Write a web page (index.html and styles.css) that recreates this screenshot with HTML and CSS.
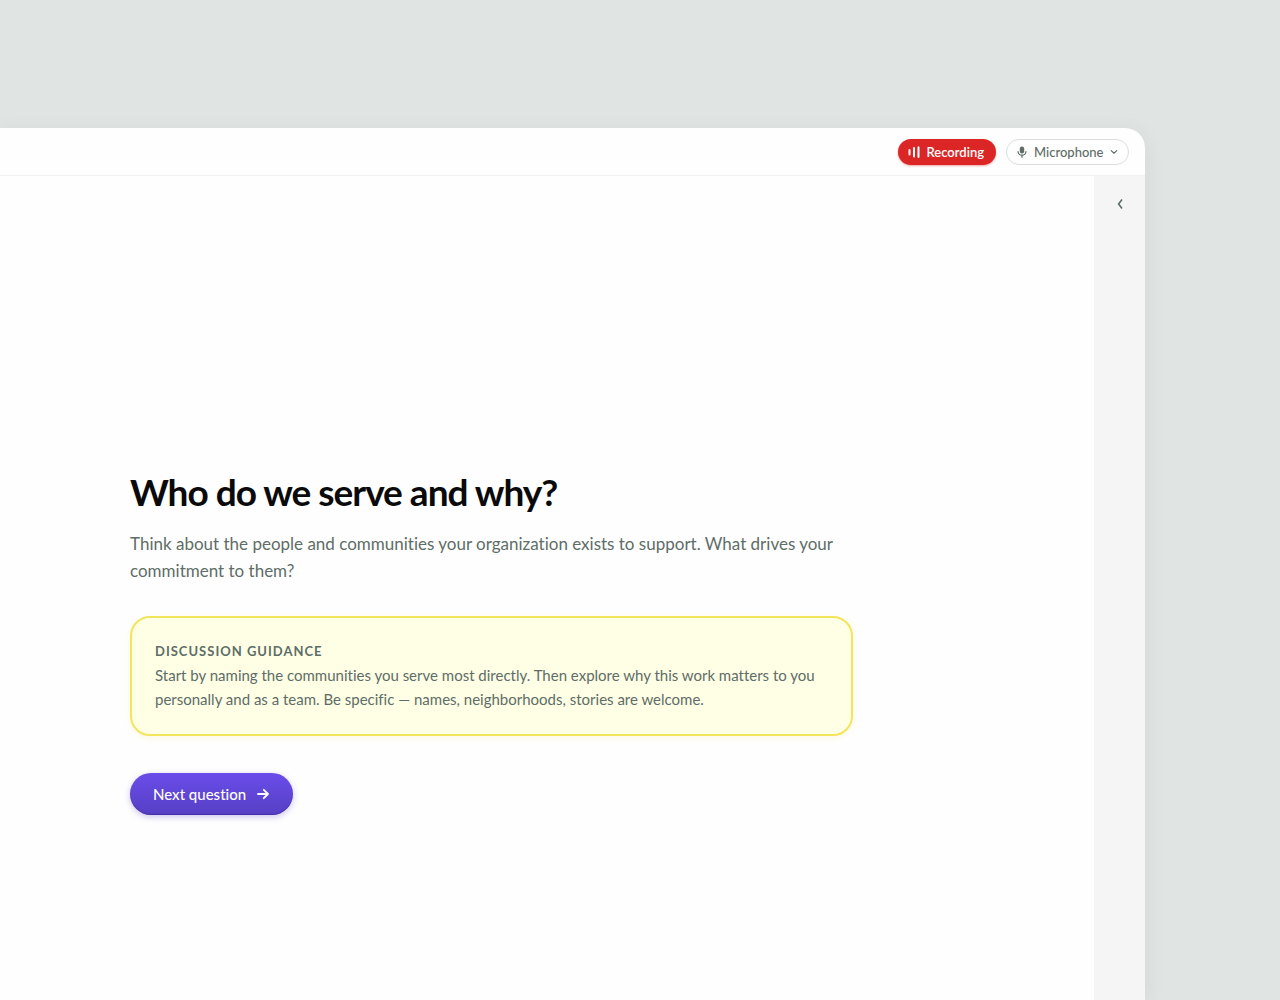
FILE: index.html
```html
<!DOCTYPE html>
<html lang="en">
<head>
  <meta charset="UTF-8" />
  <meta name="viewport" content="width=device-width, initial-scale=1.0"/>
  <title>Who do we serve and why?</title>
  <link rel="stylesheet" href="styles.css">
</head>
<body>
  <div class="window">
    <header class="topbar">
      <button class="recording" type="button">
        <svg width="12" height="12" viewBox="0 0 12 12" fill="none" stroke="currentColor" stroke-width="2" stroke-linecap="round" aria-hidden="true">
          <path d="M1.5 4v4.5M6 2v8.5M10.5 1.2v9.8"/>
        </svg>
        Recording
      </button>
      <div class="mic">
        <svg class="mic-icon" width="12" height="12" viewBox="0 0 12 12" aria-hidden="true">
          <rect x="3.8" y="0.4" width="4.4" height="7" rx="2.2" fill="currentColor"/>
          <path d="M2 5.2a4 4 0 0 0 8 0M6 9.2v2.6" fill="none" stroke="currentColor" stroke-width="1.3"/>
        </svg>
        <select class="mic-select" aria-label="Audio input">
          <option>Microphone</option>
        </select>
        <svg class="mic-chevron" width="8" height="8" viewBox="0 0 8 8" fill="none" stroke="currentColor" stroke-width="1.2" stroke-linecap="round" stroke-linejoin="round" aria-hidden="true">
          <path d="M1.2 2.6L4 5.2l2.8-2.6"/>
        </svg>
      </div>
    </header>

    <div class="content">
      <main class="main">
        <section class="question">
          <h1>Who do we serve and why?</h1>
          <p class="lead">Think about the people and communities your organization exists to support. What drives your commitment to them?</p>
          <div class="guidance">
            <h2>Discussion guidance</h2>
            <p>Start by naming the communities you serve most directly. Then explore why this work matters to you personally and as a team. Be specific — names, neighborhoods, stories are welcome.</p>
          </div>
          <button class="next" type="button">
            Next question
            <svg width="12" height="12" viewBox="0 0 12 12" fill="none" stroke="currentColor" stroke-width="1.8" stroke-linecap="round" stroke-linejoin="round" aria-hidden="true">
              <path d="M1 6h10M6.8 1.8L11 6l-4.2 4.2"/>
            </svg>
          </button>
        </section>
      </main>
      <aside class="sidebar">
        <button class="expand" type="button" aria-label="Open side panel">
          <svg width="8" height="12" viewBox="0 0 8 12" fill="none" stroke="currentColor" stroke-width="1.6" aria-hidden="true">
            <path d="M6 1.5L2.6 6 6 10.5"/>
          </svg>
        </button>
      </aside>
    </div>
  </div>
</body>
</html>
```

FILE: styles.css
```css
* {
  box-sizing: border-box;
}

body {
  margin: 0;
  min-height: 100vh;
  padding: 128px 135px 0 0;
  display: flex;
  font-family: Lato, sans-serif;
  font-variant-ligatures: none;
  background: #e0e4e3;
  color: #5e6d67;
}

h1, h2, p {
  margin: 0;
}

button, select {
  font-family: inherit;
  font-variant-ligatures: none;
  border: none;
  cursor: pointer;
}

.window {
  flex: 1;
  display: flex;
  flex-direction: column;
  background: #fefefe;
  border-radius: 0 20px 0 0;
  box-shadow: 0 4px 20px rgba(60, 80, 75, 0.08);
  overflow: hidden;
}

.topbar {
  display: flex;
  justify-content: flex-end;
  align-items: center;
  gap: 10px;
  height: 48px;
  padding: 0 16px;
  border-bottom: 1px solid #f1f2f2;
}

.recording {
  display: flex;
  align-items: center;
  gap: 6px;
  height: 26px;
  padding: 0 12px 0 10px;
  border-radius: 13px;
  background: #dc2626;
  color: #fff;
  font-size: 13px;
  font-weight: 600;
  box-shadow: 0 1px 2px rgba(220, 38, 38, 0.4);
}

.mic {
  display: flex;
  align-items: center;
  height: 26px;
  padding: 0 10px 0 9px;
  border: 1px solid #dadfdd;
  border-radius: 13px;
}

.mic-select {
  appearance: none;
  height: 24px;
  padding: 0 14px 0 6px;
  background: transparent;
  color: inherit;
  font-size: 13px;
  font-weight: 500;
}

.mic-chevron {
  margin-left: -8px;
  pointer-events: none;
}

.content {
  flex: 1;
  display: flex;
}

.main {
  flex: 1;
  padding: 294px 130px 184px;
}

.question {
  max-width: 723px;
}

h1 {
  font-size: 37px;
  line-height: 44px;
  font-weight: 700;
  letter-spacing: -1px;
  color: #0a0a0a;
}

.lead {
  margin-top: 16px;
  font-size: 17px;
  line-height: 27px;
}

.guidance {
  margin-top: 32px;
  padding: 21px 23px 23px;
  border: 2px solid #f3e45c;
  border-radius: 20px;
  background: #ffffe6;
  box-shadow: 0 2px 6px rgba(240, 220, 60, 0.15);
}

.guidance h2 {
  font-size: 13px;
  line-height: 24px;
  font-weight: 700;
  letter-spacing: 1px;
  text-transform: uppercase;
}

.guidance p {
  font-size: 15px;
  line-height: 24px;
}

.next {
  display: flex;
  align-items: center;
  gap: 11px;
  height: 42px;
  margin-top: 37px;
  padding: 0 24px 0 23px;
  border-radius: 21px;
  background: linear-gradient(#6a4dea, #573fc4);
  color: #fff;
  font-size: 15px;
  font-weight: 500;
  box-shadow: 0 2px 6px rgba(90, 64, 200, 0.3), inset 0 -1px 1px rgba(50, 30, 140, 0.5);
}

.sidebar {
  width: 51px;
  padding-top: 16px;
  display: flex;
  justify-content: center;
  align-items: flex-start;
  background: #f5f5f5;
}

.expand {
  display: flex;
  align-items: center;
  justify-content: center;
  width: 24px;
  height: 24px;
  padding: 0;
  background: transparent;
  color: #5e6d67;
}
```
